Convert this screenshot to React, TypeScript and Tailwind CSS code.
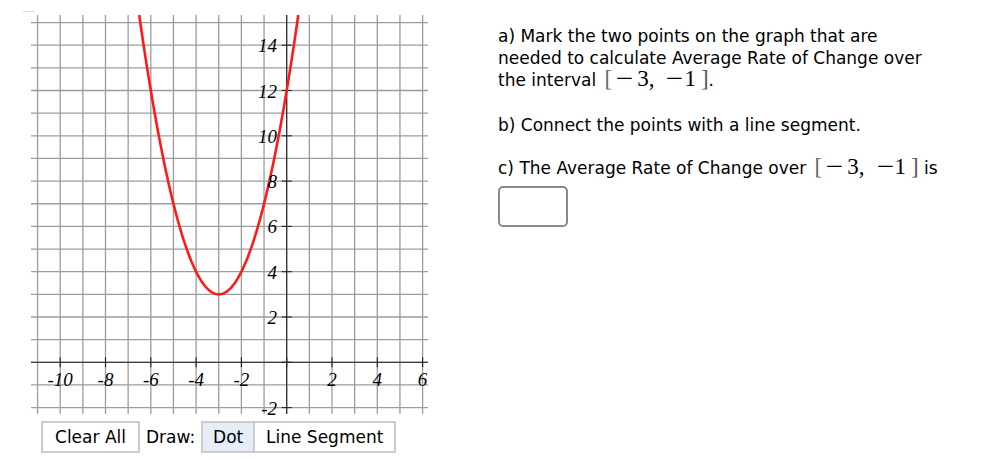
import React from "react";

// graph geometry (px): origin + unit size
const OX = 286.7;
const OY = 362.3;
const U = 22.65;
const LEFT = 31;
const RIGHT = 428;
const TOP = 15;
const BOTTOM = 414;

const px = (x: number) => OX + x * U;
const py = (y: number) => OY - y * U;

const f = (x: number) => (x + 3) * (x + 3) + 3;

// parabola, clipped to the top of the grid
const curve = (() => {
  const yMax = (OY - TOP) / U;
  const half = Math.sqrt(yMax - 3);
  const pts: string[] = [];
  const n = 120;
  for (let i = 0; i <= n; i++) {
    const x = -3 - half + (2 * half * i) / n;
    pts.push(`${px(x).toFixed(2)},${py(f(x)).toFixed(2)}`);
  }
  return "M" + pts.join(" L");
})();

const xs = Array.from({ length: 18 }, (_, i) => i - 11); // -11..6
const ys = Array.from({ length: 18 }, (_, i) => i - 2); // -2..15

function Graph() {
  return (
    <svg width={440} height={421} className="block">
      <line x1={23} y1={11.5} x2={35} y2={11.5} stroke="#ddd" strokeWidth={1} />
      {xs.map((x) => (
        <line key={"v" + x} x1={px(x)} y1={TOP} x2={px(x)} y2={BOTTOM} stroke="#9c9c9c" strokeWidth={1.3} />
      ))}
      {ys.map((y) => (
        <line key={"h" + y} x1={LEFT} y1={py(y)} x2={RIGHT} y2={py(y)} stroke="#9c9c9c" strokeWidth={1.3} />
      ))}
      {/* axes */}
      <line x1={LEFT} y1={py(0)} x2={RIGHT} y2={py(0)} stroke="#222" strokeWidth={1.1} />
      <line x1={px(0)} y1={TOP} x2={px(0)} y2={BOTTOM} stroke="#222" strokeWidth={1.1} />
      {/* ticks */}
      {[-10, -8, -6, -4, -2, 0, 2, 4, 6].map((x) => (
        <line key={"tx" + x} x1={px(x)} y1={py(0) - 5} x2={px(x)} y2={py(0) + 5} stroke="#222" strokeWidth={1.1} />
      ))}
      {[-2, 0, 2, 4, 6, 8, 10, 12, 14].map((y) => (
        <line key={"ty" + y} x1={px(0) - 5} y1={py(y)} x2={px(0) + 5} y2={py(y)} stroke="#222" strokeWidth={1.1} />
      ))}
      <path d={curve} fill="none" stroke="#ff1a1a" strokeWidth={2.6} />
      {/* labels */}
      <g fontFamily="'Liberation Serif', serif" fontStyle="italic" fontSize={19} fill="#000">
        {[-10, -8, -6, -4, -2, 2, 4, 6].map((x) => (
          <text key={"lx" + x} x={px(x)} y={385.5} textAnchor="middle">
            {x}
          </text>
        ))}
        {[-2, 2, 4, 6, 8, 10, 12, 14].map((y) => (
          <text key={"ly" + y} x={277} y={py(y) + 7} textAnchor="end">
            {y}
          </text>
        ))}
      </g>
    </svg>
  );
}

// interval [−3, −1] typeset like the math renderer
function Interval() {
  return (
    <span className="font-['Liberation_Serif',serif] text-[23px] leading-[0]">
      <span className="ml-[3px] text-[#6a6a6a]">[</span>
      <span className="inline-block ml-[6px] scale-x-[1.35]">−</span>
      <span className="ml-[6px]">3,</span>
      <span className="inline-block ml-[14px] scale-x-[1.35]">−</span>
      <span className="ml-[3px]">1</span>
      <span className="ml-[5px] text-[#555]">]</span>
    </span>
  );
}

export default function App() {
  return (
    <div className="flex w-[993px] h-[460px] bg-white text-black font-['DejaVu_Sans',sans-serif] text-[17px]">
      <div className="flex flex-col w-[498px] shrink-0">
        <Graph />
        <div className="flex items-center ml-[41px] h-[32px] leading-none">
          <button className="h-[32px] w-[99px] border-2 border-[#cbcbcb] bg-white">Clear All</button>
          <span className="ml-[6px] mr-[6px]">Draw:</span>
          <div className="flex h-[32px] border-2 border-[#cbcbcb]">
            <button className="w-[52px] bg-[#e5edf8] border-r-2 border-[#cbcbcb]">Dot</button>
            <button className="w-[139px] bg-white">Line Segment</button>
          </div>
        </div>
      </div>
      <div className="pt-[25px] leading-[22px]">
        <p>
          a) Mark the two points on the graph that are
          <br />
          needed to calculate Average Rate of Change over
          <br />
          the interval <Interval />.
        </p>
        <p className="mt-[23px]">b) Connect the points with a line segment.</p>
        <p className="mt-[21px]">
          c) The Average Rate of Change over <Interval /> is
        </p>
        <div className="mt-[7px] w-[70px] h-[41px] border-2 border-[#8a8a8a] rounded-[5px]" />
      </div>
    </div>
  );
}
